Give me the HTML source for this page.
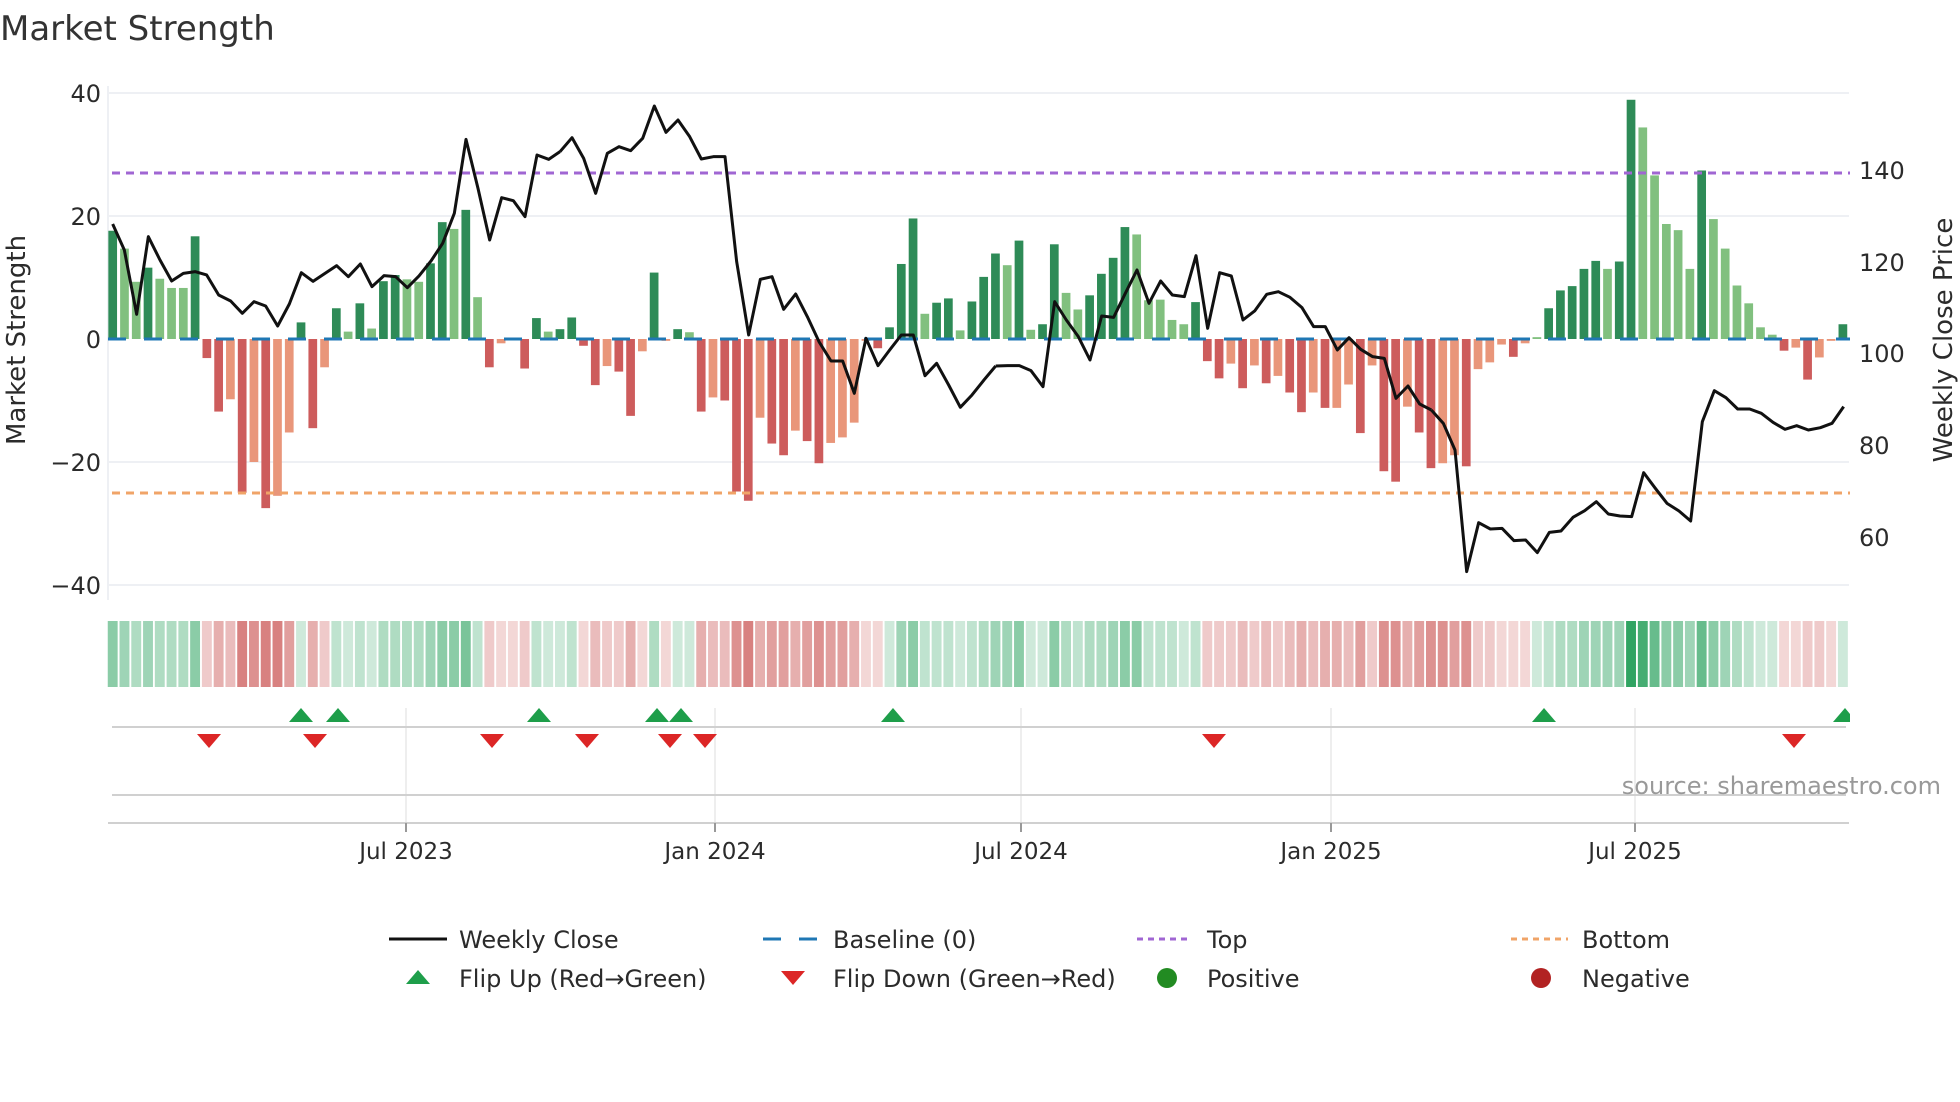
<!DOCTYPE html>
<html><head><meta charset="utf-8"><style>
html,body{margin:0;padding:0;background:#fff}
svg{display:block}
text{font-family:"DejaVu Sans","Liberation Sans",sans-serif;fill:#2b2b2b}
.g{fill:#2e8b57}.lg{fill:#81c07f}.r{fill:#cd5c5c}.lr{fill:#e9967a}
.G{fill:#2ca25f}.R{fill:#c9504f}
.a{fill-opacity:.23}.b{fill-opacity:.3}.c{fill-opacity:.38}.d{fill-opacity:.46}.e{fill-opacity:.55}.f{fill-opacity:.63}.h{fill-opacity:.72}.k{fill-opacity:.88}.m{fill-opacity:.98}
</style></head><body>
<svg width="1960" height="1102" viewBox="0 0 1960 1102" xmlns="http://www.w3.org/2000/svg">
<rect width="1960" height="1102" fill="#fff"/>
<text x="0" y="40" font-size="34" style="fill:#333">Market Strength</text>

<g stroke="#eef0f4" stroke-width="2">
<line x1="108" y1="93" x2="1849" y2="93"/>
<line x1="108" y1="216" x2="1849" y2="216"/>
<line x1="108" y1="462" x2="1849" y2="462"/>
<line x1="108" y1="585" x2="1849" y2="585"/>
<line x1="108" y1="86" x2="108" y2="600"/>
</g>

<g font-size="24" text-anchor="end">
<text x="101" y="102">40</text>
<text x="101" y="225">20</text>
<text x="101" y="348">0</text>
<text x="101" y="471">−20</text>
<text x="101" y="594">−40</text>
</g>
<g font-size="24">
<text x="1859" y="179">140</text>
<text x="1859" y="271">120</text>
<text x="1859" y="362">100</text>
<text x="1859" y="454">80</text>
<text x="1859" y="546">60</text>
</g>
<text transform="translate(25,340) rotate(-90)" font-size="26" text-anchor="middle">Market Strength</text>
<text transform="translate(1952,340) rotate(-90)" font-size="26" text-anchor="middle">Weekly Close Price</text>

<g transform="translate(112.7,339) scale(11.77,-6.15)">
<rect x="-0.37" y="0" width=".74" height="17.6" class="g"/>
<rect x="0.63" y="0" width=".74" height="14.7" class="lg"/>
<rect x="1.63" y="0" width=".74" height="9.3" class="lg"/>
<rect x="2.63" y="0" width=".74" height="11.6" class="g"/>
<rect x="3.63" y="0" width=".74" height="9.8" class="lg"/>
<rect x="4.63" y="0" width=".74" height="8.3" class="lg"/>
<rect x="5.63" y="0" width=".74" height="8.3" class="lg"/>
<rect x="6.63" y="0" width=".74" height="16.7" class="g"/>
<rect x="7.63" y="-3.1" width=".74" height="3.1" class="r"/>
<rect x="8.63" y="-11.8" width=".74" height="11.8" class="r"/>
<rect x="9.63" y="-9.8" width=".74" height="9.8" class="lr"/>
<rect x="10.63" y="-25" width=".74" height="25" class="r"/>
<rect x="11.63" y="-20" width=".74" height="20" class="lr"/>
<rect x="12.63" y="-27.5" width=".74" height="27.5" class="r"/>
<rect x="13.63" y="-25.5" width=".74" height="25.5" class="lr"/>
<rect x="14.63" y="-15.2" width=".74" height="15.2" class="lr"/>
<rect x="15.63" y="0" width=".74" height="2.7" class="g"/>
<rect x="16.63" y="-14.5" width=".74" height="14.5" class="r"/>
<rect x="17.63" y="-4.6" width=".74" height="4.6" class="lr"/>
<rect x="18.63" y="0" width=".74" height="5" class="g"/>
<rect x="19.63" y="0" width=".74" height="1.2" class="lg"/>
<rect x="20.63" y="0" width=".74" height="5.8" class="g"/>
<rect x="21.63" y="0" width=".74" height="1.7" class="lg"/>
<rect x="22.63" y="0" width=".74" height="9.4" class="g"/>
<rect x="23.63" y="0" width=".74" height="10.4" class="g"/>
<rect x="24.63" y="0" width=".74" height="9.7" class="lg"/>
<rect x="25.63" y="0" width=".74" height="9.3" class="lg"/>
<rect x="26.63" y="0" width=".74" height="12.3" class="g"/>
<rect x="27.63" y="0" width=".74" height="19" class="g"/>
<rect x="28.63" y="0" width=".74" height="17.9" class="lg"/>
<rect x="29.63" y="0" width=".74" height="21" class="g"/>
<rect x="30.63" y="0" width=".74" height="6.8" class="lg"/>
<rect x="31.63" y="-4.6" width=".74" height="4.6" class="r"/>
<rect x="32.63" y="-0.7" width=".74" height="0.7" class="lr"/>
<rect x="33.63" y="-0.2" width=".74" height="0.2" class="lr"/>
<rect x="34.63" y="-4.8" width=".74" height="4.8" class="r"/>
<rect x="35.63" y="0" width=".74" height="3.4" class="g"/>
<rect x="36.63" y="0" width=".74" height="1.2" class="lg"/>
<rect x="37.63" y="0" width=".74" height="1.6" class="g"/>
<rect x="38.63" y="0" width=".74" height="3.5" class="g"/>
<rect x="39.63" y="-1.1" width=".74" height="1.1" class="r"/>
<rect x="40.63" y="-7.5" width=".74" height="7.5" class="r"/>
<rect x="41.63" y="-4.4" width=".74" height="4.4" class="lr"/>
<rect x="42.63" y="-5.3" width=".74" height="5.3" class="r"/>
<rect x="43.63" y="-12.5" width=".74" height="12.5" class="r"/>
<rect x="44.63" y="-2" width=".74" height="2" class="lr"/>
<rect x="45.63" y="0" width=".74" height="10.8" class="g"/>
<rect x="46.63" y="-0.3" width=".74" height="0.3" class="lr"/>
<rect x="47.63" y="0" width=".74" height="1.6" class="g"/>
<rect x="48.63" y="0" width=".74" height="1.1" class="lg"/>
<rect x="49.63" y="-11.8" width=".74" height="11.8" class="r"/>
<rect x="50.63" y="-9.5" width=".74" height="9.5" class="lr"/>
<rect x="51.63" y="-10" width=".74" height="10" class="r"/>
<rect x="52.63" y="-24.8" width=".74" height="24.8" class="r"/>
<rect x="53.63" y="-26.3" width=".74" height="26.3" class="r"/>
<rect x="54.63" y="-12.8" width=".74" height="12.8" class="lr"/>
<rect x="55.63" y="-17" width=".74" height="17" class="r"/>
<rect x="56.63" y="-18.9" width=".74" height="18.9" class="r"/>
<rect x="57.63" y="-14.9" width=".74" height="14.9" class="lr"/>
<rect x="58.63" y="-16.6" width=".74" height="16.6" class="r"/>
<rect x="59.63" y="-20.2" width=".74" height="20.2" class="r"/>
<rect x="60.63" y="-16.9" width=".74" height="16.9" class="lr"/>
<rect x="61.63" y="-16" width=".74" height="16" class="lr"/>
<rect x="62.63" y="-13.6" width=".74" height="13.6" class="lr"/>
<rect x="63.63" y="-0.3" width=".74" height="0.3" class="lr"/>
<rect x="64.63" y="-1.5" width=".74" height="1.5" class="r"/>
<rect x="65.63" y="0" width=".74" height="1.9" class="g"/>
<rect x="66.63" y="0" width=".74" height="12.2" class="g"/>
<rect x="67.63" y="0" width=".74" height="19.6" class="g"/>
<rect x="68.63" y="0" width=".74" height="4.1" class="lg"/>
<rect x="69.63" y="0" width=".74" height="5.9" class="g"/>
<rect x="70.63" y="0" width=".74" height="6.6" class="g"/>
<rect x="71.63" y="0" width=".74" height="1.4" class="lg"/>
<rect x="72.63" y="0" width=".74" height="6.1" class="g"/>
<rect x="73.63" y="0" width=".74" height="10.1" class="g"/>
<rect x="74.63" y="0" width=".74" height="13.9" class="g"/>
<rect x="75.63" y="0" width=".74" height="12" class="lg"/>
<rect x="76.63" y="0" width=".74" height="16" class="g"/>
<rect x="77.63" y="0" width=".74" height="1.5" class="lg"/>
<rect x="78.63" y="0" width=".74" height="2.4" class="g"/>
<rect x="79.63" y="0" width=".74" height="15.4" class="g"/>
<rect x="80.63" y="0" width=".74" height="7.5" class="lg"/>
<rect x="81.63" y="0" width=".74" height="4.8" class="lg"/>
<rect x="82.63" y="0" width=".74" height="7.1" class="g"/>
<rect x="83.63" y="0" width=".74" height="10.6" class="g"/>
<rect x="84.63" y="0" width=".74" height="13.2" class="g"/>
<rect x="85.63" y="0" width=".74" height="18.2" class="g"/>
<rect x="86.63" y="0" width=".74" height="17" class="lg"/>
<rect x="87.63" y="0" width=".74" height="6.3" class="lg"/>
<rect x="88.63" y="0" width=".74" height="6.4" class="lg"/>
<rect x="89.63" y="0" width=".74" height="3.1" class="lg"/>
<rect x="90.63" y="0" width=".74" height="2.4" class="lg"/>
<rect x="91.63" y="0" width=".74" height="6" class="g"/>
<rect x="92.63" y="-3.6" width=".74" height="3.6" class="r"/>
<rect x="93.63" y="-6.4" width=".74" height="6.4" class="r"/>
<rect x="94.63" y="-4" width=".74" height="4" class="lr"/>
<rect x="95.63" y="-8" width=".74" height="8" class="r"/>
<rect x="96.63" y="-4.3" width=".74" height="4.3" class="lr"/>
<rect x="97.63" y="-7.2" width=".74" height="7.2" class="r"/>
<rect x="98.63" y="-6" width=".74" height="6" class="lr"/>
<rect x="99.63" y="-8.7" width=".74" height="8.7" class="r"/>
<rect x="100.63" y="-11.9" width=".74" height="11.9" class="r"/>
<rect x="101.63" y="-8.7" width=".74" height="8.7" class="lr"/>
<rect x="102.63" y="-11.2" width=".74" height="11.2" class="r"/>
<rect x="103.63" y="-11.2" width=".74" height="11.2" class="lr"/>
<rect x="104.63" y="-7.4" width=".74" height="7.4" class="lr"/>
<rect x="105.63" y="-15.3" width=".74" height="15.3" class="r"/>
<rect x="106.63" y="-4.3" width=".74" height="4.3" class="lr"/>
<rect x="107.63" y="-21.5" width=".74" height="21.5" class="r"/>
<rect x="108.63" y="-23.2" width=".74" height="23.2" class="r"/>
<rect x="109.63" y="-11" width=".74" height="11" class="lr"/>
<rect x="110.63" y="-15.2" width=".74" height="15.2" class="r"/>
<rect x="111.63" y="-21" width=".74" height="21" class="r"/>
<rect x="112.63" y="-20.2" width=".74" height="20.2" class="lr"/>
<rect x="113.63" y="-18.9" width=".74" height="18.9" class="lr"/>
<rect x="114.63" y="-20.7" width=".74" height="20.7" class="r"/>
<rect x="115.63" y="-4.9" width=".74" height="4.9" class="lr"/>
<rect x="116.63" y="-3.8" width=".74" height="3.8" class="lr"/>
<rect x="117.63" y="-0.9" width=".74" height="0.9" class="lr"/>
<rect x="118.63" y="-2.9" width=".74" height="2.9" class="r"/>
<rect x="119.63" y="-0.7" width=".74" height="0.7" class="lr"/>
<rect x="120.63" y="0" width=".74" height="0.3" class="lg"/>
<rect x="121.63" y="0" width=".74" height="5" class="g"/>
<rect x="122.63" y="0" width=".74" height="7.9" class="g"/>
<rect x="123.63" y="0" width=".74" height="8.6" class="g"/>
<rect x="124.63" y="0" width=".74" height="11.4" class="g"/>
<rect x="125.63" y="0" width=".74" height="12.7" class="g"/>
<rect x="126.63" y="0" width=".74" height="11.4" class="lg"/>
<rect x="127.63" y="0" width=".74" height="12.6" class="g"/>
<rect x="128.63" y="0" width=".74" height="38.9" class="g"/>
<rect x="129.63" y="0" width=".74" height="34.4" class="lg"/>
<rect x="130.63" y="0" width=".74" height="26.6" class="lg"/>
<rect x="131.63" y="0" width=".74" height="18.7" class="lg"/>
<rect x="132.63" y="0" width=".74" height="17.7" class="lg"/>
<rect x="133.63" y="0" width=".74" height="11.4" class="lg"/>
<rect x="134.63" y="0" width=".74" height="27.4" class="g"/>
<rect x="135.63" y="0" width=".74" height="19.5" class="lg"/>
<rect x="136.63" y="0" width=".74" height="14.7" class="lg"/>
<rect x="137.63" y="0" width=".74" height="8.7" class="lg"/>
<rect x="138.63" y="0" width=".74" height="5.8" class="lg"/>
<rect x="139.63" y="0" width=".74" height="1.9" class="lg"/>
<rect x="140.63" y="0" width=".74" height="0.7" class="lg"/>
<rect x="141.63" y="-1.9" width=".74" height="1.9" class="r"/>
<rect x="142.63" y="-1.4" width=".74" height="1.4" class="lr"/>
<rect x="143.63" y="-6.6" width=".74" height="6.6" class="r"/>
<rect x="144.63" y="-3" width=".74" height="3" class="lr"/>
<rect x="145.63" y="-0.3" width=".74" height="0.3" class="lr"/>
<rect x="146.63" y="0" width=".74" height="2.4" class="g"/>
</g>

<line x1="108" y1="339" x2="1850" y2="339" stroke="#1f77b4" stroke-width="3" stroke-dasharray="18 18"/>
<line x1="112" y1="173" x2="1850" y2="173" stroke="#a066d3" stroke-width="3" stroke-dasharray="8 6"/>
<line x1="112" y1="493" x2="1850" y2="493" stroke="#f0a468" stroke-width="3" stroke-dasharray="8 6"/>

<g fill="none" stroke="#111" stroke-width="9" stroke-linejoin="round">
<polyline transform="translate(100,80) scale(0.33333)" points="38,432 73,510 110,703 145,470 180,540 215,603 250,580 286,575 320,585 356,645 392,663 427,700 462,665 497,678 533,738 568,672 604,578 639,604 675,580 710,557 745,590 781,552 816,620 852,587 887,590 922,623 957,588 993,543 1028,490 1063,400 1098,178 1134,325 1169,480 1205,353 1240,362 1275,410 1311,225 1346,238 1380,215"/>
<polyline transform="translate(540,80) scale(0.33333)" points="60,215 96,173 131,235 167,340 202,220 237,200 272,212 308,175 343,78 378,157 414,120 449,170 484,237 520,230 555,230 590,545 626,765 661,598 696,590 731,688 767,642 802,710 837,785 873,843 908,843 943,940 978,775 1014,857 1049,810 1084,765 1120,765 1155,887 1190,850 1226,915 1261,982 1296,945 1332,900 1367,858"/>
<polyline transform="translate(980,80) scale(0.33333)" points="47,858 83,857 118,857 153,872 189,920 224,665 259,720 295,770 330,840 365,708 401,712 436,640 471,570 507,670 542,603 577,645 613,650 648,527 683,745 719,578 754,588 789,720 824,693 860,643 895,635 930,652 966,683 1001,740 1036,740 1072,810 1107,773 1142,808 1178,830 1213,835 1248,955 1284,918 1319,972 1354,990"/>
<polyline transform="translate(1420,80) scale(0.33333)" points="34,990 70,1030 105,1110 140,1475 176,1328 211,1347 246,1345 282,1382 317,1380 352,1418 388,1357 423,1353 459,1312 494,1292 529,1265 565,1302 600,1308 635,1310 671,1178 706,1225 741,1270 777,1293 812,1323 847,1025 883,932 918,953 953,987 989,987 1024,1000 1059,1027 1095,1048 1130,1037 1165,1050 1201,1043 1236,1030 1271,980"/>
</g>

<g transform="translate(112.7,-3) scale(11.77,1)">
<rect x="-0.42" y="624" width=".84" height="66" class="G e"/>
<rect x="0.58" y="624" width=".84" height="66" class="G d"/>
<rect x="1.58" y="624" width=".84" height="66" class="G c"/>
<rect x="2.58" y="624" width=".84" height="66" class="G d"/>
<rect x="3.58" y="624" width=".84" height="66" class="G c"/>
<rect x="4.58" y="624" width=".84" height="66" class="G c"/>
<rect x="5.58" y="624" width=".84" height="66" class="G c"/>
<rect x="6.58" y="624" width=".84" height="66" class="G e"/>
<rect x="7.58" y="624" width=".84" height="66" class="R b"/>
<rect x="8.58" y="624" width=".84" height="66" class="R d"/>
<rect x="9.58" y="624" width=".84" height="66" class="R c"/>
<rect x="10.58" y="624" width=".84" height="66" class="R h"/>
<rect x="11.58" y="624" width=".84" height="66" class="R f"/>
<rect x="12.58" y="624" width=".84" height="66" class="R h"/>
<rect x="13.58" y="624" width=".84" height="66" class="R h"/>
<rect x="14.58" y="624" width=".84" height="66" class="R e"/>
<rect x="15.58" y="624" width=".84" height="66" class="G a"/>
<rect x="16.58" y="624" width=".84" height="66" class="R d"/>
<rect x="17.58" y="624" width=".84" height="66" class="R b"/>
<rect x="18.58" y="624" width=".84" height="66" class="G b"/>
<rect x="19.58" y="624" width=".84" height="66" class="G a"/>
<rect x="20.58" y="624" width=".84" height="66" class="G b"/>
<rect x="21.58" y="624" width=".84" height="66" class="G a"/>
<rect x="22.58" y="624" width=".84" height="66" class="G c"/>
<rect x="23.58" y="624" width=".84" height="66" class="G c"/>
<rect x="24.58" y="624" width=".84" height="66" class="G c"/>
<rect x="25.58" y="624" width=".84" height="66" class="G c"/>
<rect x="26.58" y="624" width=".84" height="66" class="G d"/>
<rect x="27.58" y="624" width=".84" height="66" class="G e"/>
<rect x="28.58" y="624" width=".84" height="66" class="G e"/>
<rect x="29.58" y="624" width=".84" height="66" class="G f"/>
<rect x="30.58" y="624" width=".84" height="66" class="G b"/>
<rect x="31.58" y="624" width=".84" height="66" class="R b"/>
<rect x="32.58" y="624" width=".84" height="66" class="R a"/>
<rect x="33.58" y="624" width=".84" height="66" class="R a"/>
<rect x="34.58" y="624" width=".84" height="66" class="R b"/>
<rect x="35.58" y="624" width=".84" height="66" class="G b"/>
<rect x="36.58" y="624" width=".84" height="66" class="G a"/>
<rect x="37.58" y="624" width=".84" height="66" class="G a"/>
<rect x="38.58" y="624" width=".84" height="66" class="G b"/>
<rect x="39.58" y="624" width=".84" height="66" class="R a"/>
<rect x="40.58" y="624" width=".84" height="66" class="R c"/>
<rect x="41.58" y="624" width=".84" height="66" class="R b"/>
<rect x="42.58" y="624" width=".84" height="66" class="R b"/>
<rect x="43.58" y="624" width=".84" height="66" class="R d"/>
<rect x="44.58" y="624" width=".84" height="66" class="R a"/>
<rect x="45.58" y="624" width=".84" height="66" class="G c"/>
<rect x="46.58" y="624" width=".84" height="66" class="R a"/>
<rect x="47.58" y="624" width=".84" height="66" class="G a"/>
<rect x="48.58" y="624" width=".84" height="66" class="G a"/>
<rect x="49.58" y="624" width=".84" height="66" class="R d"/>
<rect x="50.58" y="624" width=".84" height="66" class="R c"/>
<rect x="51.58" y="624" width=".84" height="66" class="R c"/>
<rect x="52.58" y="624" width=".84" height="66" class="R f"/>
<rect x="53.58" y="624" width=".84" height="66" class="R h"/>
<rect x="54.58" y="624" width=".84" height="66" class="R d"/>
<rect x="55.58" y="624" width=".84" height="66" class="R e"/>
<rect x="56.58" y="624" width=".84" height="66" class="R e"/>
<rect x="57.58" y="624" width=".84" height="66" class="R d"/>
<rect x="58.58" y="624" width=".84" height="66" class="R e"/>
<rect x="59.58" y="624" width=".84" height="66" class="R f"/>
<rect x="60.58" y="624" width=".84" height="66" class="R e"/>
<rect x="61.58" y="624" width=".84" height="66" class="R e"/>
<rect x="62.58" y="624" width=".84" height="66" class="R d"/>
<rect x="63.58" y="624" width=".84" height="66" class="R a"/>
<rect x="64.58" y="624" width=".84" height="66" class="R a"/>
<rect x="65.58" y="624" width=".84" height="66" class="G a"/>
<rect x="66.58" y="624" width=".84" height="66" class="G d"/>
<rect x="67.58" y="624" width=".84" height="66" class="G e"/>
<rect x="68.58" y="624" width=".84" height="66" class="G b"/>
<rect x="69.58" y="624" width=".84" height="66" class="G b"/>
<rect x="70.58" y="624" width=".84" height="66" class="G b"/>
<rect x="71.58" y="624" width=".84" height="66" class="G a"/>
<rect x="72.58" y="624" width=".84" height="66" class="G b"/>
<rect x="73.58" y="624" width=".84" height="66" class="G c"/>
<rect x="74.58" y="624" width=".84" height="66" class="G d"/>
<rect x="75.58" y="624" width=".84" height="66" class="G d"/>
<rect x="76.58" y="624" width=".84" height="66" class="G e"/>
<rect x="77.58" y="624" width=".84" height="66" class="G a"/>
<rect x="78.58" y="624" width=".84" height="66" class="G a"/>
<rect x="79.58" y="624" width=".84" height="66" class="G e"/>
<rect x="80.58" y="624" width=".84" height="66" class="G c"/>
<rect x="81.58" y="624" width=".84" height="66" class="G b"/>
<rect x="82.58" y="624" width=".84" height="66" class="G c"/>
<rect x="83.58" y="624" width=".84" height="66" class="G c"/>
<rect x="84.58" y="624" width=".84" height="66" class="G d"/>
<rect x="85.58" y="624" width=".84" height="66" class="G e"/>
<rect x="86.58" y="624" width=".84" height="66" class="G e"/>
<rect x="87.58" y="624" width=".84" height="66" class="G b"/>
<rect x="88.58" y="624" width=".84" height="66" class="G b"/>
<rect x="89.58" y="624" width=".84" height="66" class="G b"/>
<rect x="90.58" y="624" width=".84" height="66" class="G a"/>
<rect x="91.58" y="624" width=".84" height="66" class="G b"/>
<rect x="92.58" y="624" width=".84" height="66" class="R b"/>
<rect x="93.58" y="624" width=".84" height="66" class="R b"/>
<rect x="94.58" y="624" width=".84" height="66" class="R b"/>
<rect x="95.58" y="624" width=".84" height="66" class="R c"/>
<rect x="96.58" y="624" width=".84" height="66" class="R b"/>
<rect x="97.58" y="624" width=".84" height="66" class="R c"/>
<rect x="98.58" y="624" width=".84" height="66" class="R b"/>
<rect x="99.58" y="624" width=".84" height="66" class="R c"/>
<rect x="100.58" y="624" width=".84" height="66" class="R d"/>
<rect x="101.58" y="624" width=".84" height="66" class="R c"/>
<rect x="102.58" y="624" width=".84" height="66" class="R d"/>
<rect x="103.58" y="624" width=".84" height="66" class="R d"/>
<rect x="104.58" y="624" width=".84" height="66" class="R c"/>
<rect x="105.58" y="624" width=".84" height="66" class="R e"/>
<rect x="106.58" y="624" width=".84" height="66" class="R b"/>
<rect x="107.58" y="624" width=".84" height="66" class="R f"/>
<rect x="108.58" y="624" width=".84" height="66" class="R f"/>
<rect x="109.58" y="624" width=".84" height="66" class="R d"/>
<rect x="110.58" y="624" width=".84" height="66" class="R e"/>
<rect x="111.58" y="624" width=".84" height="66" class="R f"/>
<rect x="112.58" y="624" width=".84" height="66" class="R f"/>
<rect x="113.58" y="624" width=".84" height="66" class="R e"/>
<rect x="114.58" y="624" width=".84" height="66" class="R f"/>
<rect x="115.58" y="624" width=".84" height="66" class="R b"/>
<rect x="116.58" y="624" width=".84" height="66" class="R b"/>
<rect x="117.58" y="624" width=".84" height="66" class="R a"/>
<rect x="118.58" y="624" width=".84" height="66" class="R a"/>
<rect x="119.58" y="624" width=".84" height="66" class="R a"/>
<rect x="120.58" y="624" width=".84" height="66" class="G a"/>
<rect x="121.58" y="624" width=".84" height="66" class="G b"/>
<rect x="122.58" y="624" width=".84" height="66" class="G c"/>
<rect x="123.58" y="624" width=".84" height="66" class="G c"/>
<rect x="124.58" y="624" width=".84" height="66" class="G d"/>
<rect x="125.58" y="624" width=".84" height="66" class="G d"/>
<rect x="126.58" y="624" width=".84" height="66" class="G d"/>
<rect x="127.58" y="624" width=".84" height="66" class="G d"/>
<rect x="128.58" y="624" width=".84" height="66" class="G m"/>
<rect x="129.58" y="624" width=".84" height="66" class="G k"/>
<rect x="130.58" y="624" width=".84" height="66" class="G h"/>
<rect x="131.58" y="624" width=".84" height="66" class="G e"/>
<rect x="132.58" y="624" width=".84" height="66" class="G e"/>
<rect x="133.58" y="624" width=".84" height="66" class="G d"/>
<rect x="134.58" y="624" width=".84" height="66" class="G h"/>
<rect x="135.58" y="624" width=".84" height="66" class="G e"/>
<rect x="136.58" y="624" width=".84" height="66" class="G d"/>
<rect x="137.58" y="624" width=".84" height="66" class="G c"/>
<rect x="138.58" y="624" width=".84" height="66" class="G b"/>
<rect x="139.58" y="624" width=".84" height="66" class="G a"/>
<rect x="140.58" y="624" width=".84" height="66" class="G a"/>
<rect x="141.58" y="624" width=".84" height="66" class="R a"/>
<rect x="142.58" y="624" width=".84" height="66" class="R a"/>
<rect x="143.58" y="624" width=".84" height="66" class="R b"/>
<rect x="144.58" y="624" width=".84" height="66" class="R b"/>
<rect x="145.58" y="624" width=".84" height="66" class="R a"/>
<rect x="146.58" y="624" width=".84" height="66" class="G a"/>
</g>

<g transform="translate(0,-4)">
<g stroke="#eeeeee" stroke-width="2">
<line x1="406" y1="712" x2="406" y2="827"/>
<line x1="715" y1="712" x2="715" y2="827"/>
<line x1="1021" y1="712" x2="1021" y2="827"/>
<line x1="1331" y1="712" x2="1331" y2="827"/>
<line x1="1635" y1="712" x2="1635" y2="827"/>
</g>
<g stroke="#d0d0d0" stroke-width="2">
<line x1="112" y1="731" x2="1846" y2="731"/>
<line x1="112" y1="799" x2="1846" y2="799"/>
<line x1="108" y1="827" x2="1849" y2="827"/>
</g>
<g stroke="#999" stroke-width="2">
<line x1="406" y1="827" x2="406" y2="836"/>
<line x1="715" y1="827" x2="715" y2="836"/>
<line x1="1021" y1="827" x2="1021" y2="836"/>
<line x1="1331" y1="827" x2="1331" y2="836"/>
<line x1="1635" y1="827" x2="1635" y2="836"/>
</g>
<g fill="#1e9e4a">
<polygon points="289,726 313,726 301,712"/>
<polygon points="326,726 350,726 338,712"/>
<polygon points="527,726 551,726 539,712"/>
<polygon points="645,726 669,726 657,712"/>
<polygon points="669,726 693,726 681,712"/>
<polygon points="881,726 905,726 893,712"/>
<polygon points="1532,726 1556,726 1544,712"/>
<polygon points="1833,726 1850,726 1850,718 1845,712"/>
</g>
<g fill="#dc2626">
<polygon points="197,738 221,738 209,752"/>
<polygon points="303,738 327,738 315,752"/>
<polygon points="480,738 504,738 492,752"/>
<polygon points="575,738 599,738 587,752"/>
<polygon points="658,738 682,738 670,752"/>
<polygon points="693,738 717,738 705,752"/>
<polygon points="1202,738 1226,738 1214,752"/>
<polygon points="1782,738 1806,738 1794,752"/>
</g>
</g>
<text x="1941" y="794" font-size="24" text-anchor="end" style="fill:#999">source: sharemaestro.com</text>

<g font-size="23" text-anchor="middle">
<text x="406" y="859">Jul 2023</text>
<text x="715" y="859">Jan 2024</text>
<text x="1021" y="859">Jul 2024</text>
<text x="1331" y="859">Jan 2025</text>
<text x="1635" y="859">Jul 2025</text>
</g>

<g transform="translate(0,-5)">
<line x1="389" y1="944" x2="447" y2="944" stroke="#111" stroke-width="3"/>
<line x1="763" y1="944" x2="817" y2="944" stroke="#1f77b4" stroke-width="3" stroke-dasharray="18 18"/>
<line x1="1137" y1="944" x2="1191" y2="944" stroke="#a066d3" stroke-width="3" stroke-dasharray="6 5"/>
<line x1="1511" y1="944" x2="1568" y2="944" stroke="#f0a468" stroke-width="3" stroke-dasharray="6 5"/>
<polygon points="406,989 430,989 418,975" fill="#1e9e4a"/>
<polygon points="781,976 805,976 793,990" fill="#dc2626"/>
<circle cx="1167" cy="983" r="10" fill="#228b22"/>
<circle cx="1541" cy="983" r="10" fill="#b22222"/>
<g font-size="24">
<text x="459" y="953">Weekly Close</text>
<text x="833" y="953">Baseline (0)</text>
<text x="1207" y="953">Top</text>
<text x="1582" y="953">Bottom</text>
<text x="459" y="992">Flip Up (Red→Green)</text>
<text x="833" y="992">Flip Down (Green→Red)</text>
<text x="1207" y="992">Positive</text>
<text x="1582" y="992">Negative</text>
</g>
</g>
</svg>
</body></html>
